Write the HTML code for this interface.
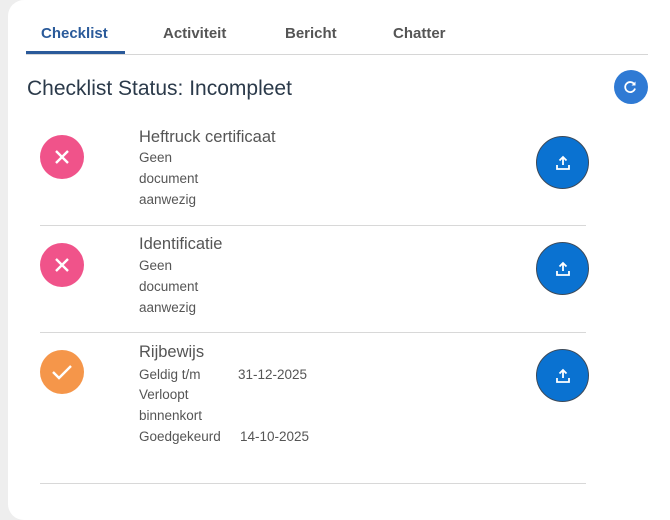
<!DOCTYPE html>
<html><head><style>
*{margin:0;padding:0;box-sizing:border-box}
body{width:670px;height:492px;background:#eeeeee;font-family:"Liberation Sans",sans-serif;position:relative;overflow:hidden}
.card{position:absolute;left:8px;top:0;width:680px;height:520px;background:#fff;border-radius:16px}
.abs{position:absolute}
.tab{position:absolute;top:25px;font-size:15px;font-weight:bold;color:#555}
.t{position:absolute;left:139px;font-size:16.5px;color:#555}
.s{position:absolute;font-size:13.5px;color:#555}
.ic{position:absolute;left:40px;width:44px;height:44px;border-radius:50%}
.up{position:absolute;left:536px;width:53px;height:53px;border-radius:50%;background:#0a72d1;border:1.5px solid #3c4a5a}
.up svg{position:absolute;left:17px;top:17px}
.hr{position:absolute;left:40px;width:546px;height:1px;background:#d8d8d8}
</style></head><body>
<div class="card"></div>
<div class="tab" style="left:41px;color:#2a5a9a">Checklist</div>
<div class="tab" style="left:163px">Activiteit</div>
<div class="tab" style="left:285px">Bericht</div>
<div class="tab" style="left:393px">Chatter</div>
<div class="abs" style="left:26px;top:54px;width:622px;height:1px;background:#d6d6d6"></div>
<div class="abs" style="left:26px;top:51px;width:99px;height:3px;background:#2a5a9a"></div>
<div class="abs" style="left:27px;top:77px;font-size:21px;color:#2b3a4a">Checklist Status: Incompleet</div>
<div class="abs" style="left:614px;top:70px;width:34px;height:34px;border-radius:50%;background:#2f7ad4">
<svg width="34" height="34" viewBox="0 0 34 34"><path d="M20.5 14.5a5 5 0 1 0 0.5 4" fill="none" stroke="#fff" stroke-width="1.8"/><path d="M21.5 11.5v4h-4z" fill="#fff"/></svg></div>

<div class="ic" style="top:135px;background:#f0538a"><svg width="44" height="44"><path d="M16 16l12 12M28 16l-12 12" stroke="#fff" stroke-width="2.4"/></svg></div>
<div class="t" style="top:128px">Heftruck certificaat</div>
<div class="s" style="left:139px;top:150px">Geen</div>
<div class="s" style="left:139px;top:171px">document</div>
<div class="s" style="left:139px;top:192px">aanwezig</div>
<div class="up" style="top:136px"><svg width="18" height="18"><path d="M9 3v8M5.5 6.5L9 3l3.5 3.5M3 11v4h12v-4" fill="none" stroke="#fff" stroke-width="1.8"/></svg></div>
<div class="hr" style="top:225px"></div>

<div class="ic" style="top:243px;background:#f0538a"><svg width="44" height="44"><path d="M16 16l12 12M28 16l-12 12" stroke="#fff" stroke-width="2.4"/></svg></div>
<div class="t" style="top:235px">Identificatie</div>
<div class="s" style="left:139px;top:258px">Geen</div>
<div class="s" style="left:139px;top:279px">document</div>
<div class="s" style="left:139px;top:300px">aanwezig</div>
<div class="up" style="top:242px"><svg width="18" height="18"><path d="M9 3v8M5.5 6.5L9 3l3.5 3.5M3 11v4h12v-4" fill="none" stroke="#fff" stroke-width="1.8"/></svg></div>
<div class="hr" style="top:332px"></div>

<div class="ic" style="top:350px;background:#f5964a"><svg width="44" height="44"><path d="M13 22l6 6 12-12" fill="none" stroke="#fff" stroke-width="2.4"/></svg></div>
<div class="t" style="top:343px">Rijbewijs</div>
<div class="s" style="left:139px;top:367px">Geldig t/m</div>
<div class="s" style="left:238px;top:367px">31-12-2025</div>
<div class="s" style="left:139px;top:387px">Verloopt</div>
<div class="s" style="left:139px;top:408px">binnenkort</div>
<div class="s" style="left:139px;top:429px">Goedgekeurd</div>
<div class="s" style="left:240px;top:429px">14-10-2025</div>
<div class="up" style="top:349px"><svg width="18" height="18"><path d="M9 3v8M5.5 6.5L9 3l3.5 3.5M3 11v4h12v-4" fill="none" stroke="#fff" stroke-width="1.8"/></svg></div>
<div class="hr" style="top:483px"></div>
</body></html>
